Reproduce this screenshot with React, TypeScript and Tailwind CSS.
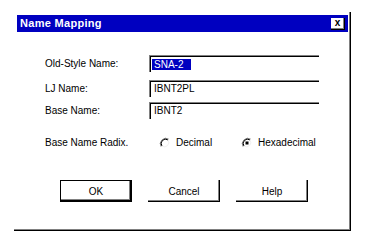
import React from "react";

function Radio({ checked }: { checked?: boolean }) {
  return (
    <svg width="12" height="12" viewBox="0 0 12 12" className="shrink-0">
      <path d="M2.2 9.8 A5.5 5.5 0 0 1 9.8 2.2" fill="none" stroke="#808080" strokeWidth="1" />
      <path d="M3 9 A4.3 4.3 0 0 1 9 3" fill="none" stroke="#000" strokeWidth="1" />
      <path d="M9.8 2.2 A5.5 5.5 0 0 1 2.2 9.8" fill="none" stroke="#fff" strokeWidth="1" />
      <path d="M9 3 A4.3 4.3 0 0 1 3 9" fill="none" stroke="#f0f0f0" strokeWidth="1" />
      {checked && <rect x="4.5" y="4.5" width="3" height="3" fill="#000" />}
    </svg>
  );
}

function Field({ label, value, selected, className }: { label: string; value: string; selected?: boolean; className?: string }) {
  return (
    <div className={"flex items-center " + (className ?? "")}>
      <div className="w-[104px] text-[10px] leading-none text-black">{label}</div>
      <div className="w-[170px] h-[17px] border-t border-l border-t-[#808080] border-l-[#808080] shadow-[inset_1px_1px_0_#000] bg-white flex items-center pl-[2px]">
        {selected ? (
          <span className="bg-[#0000c0] text-white text-[10px] leading-[11px] h-[11px] pl-[2px] pr-[8px]">{value}</span>
        ) : (
          <span className="text-black text-[10px] leading-none pl-[2px]">{value}</span>
        )}
      </div>
    </div>
  );
}

function Btn({ children, isDefault }: { children: React.ReactNode; isDefault?: boolean }) {
  return (
    <div
      className={
        "w-[72px] h-[22px] flex items-center justify-center text-[10px] text-black bg-white " +
        (isDefault
          ? "border border-black shadow-[inset_-1px_-1px_0_#000,inset_-2px_-2px_0_#808080]"
          : "shadow-[inset_-1px_-1px_0_#000,inset_-2px_-2px_0_#808080]")
      }
    >
      {children}
    </div>
  );
}

export default function App() {
  return (
    <div
      className="w-[388px] h-[241px] bg-white overflow-hidden"
      style={{ fontFamily: '"Liberation Sans", Arial, sans-serif' }}
    >
      <div className="pl-[14px] pt-[12px]">
        <div className="w-[337px] h-[219px] border-r border-b border-black shadow-[inset_-1px_-1px_0_#808080] pt-[3px] pl-[3px] flex flex-col">
          <div className="w-[331px] h-[17px] bg-[#0000c0] flex items-center justify-between pl-[3px] pr-[3px]">
            <span className="text-white font-bold text-[11px] leading-none tracking-[0.3px]">Name Mapping</span>
            <div className="w-[14px] h-[12px] bg-white shadow-[inset_-1px_-1px_0_#000,inset_-2px_-2px_0_#808080] flex items-center justify-center pb-[1px] pr-[1px]">
              <span className="text-black font-bold text-[10px] leading-none">x</span>
            </div>
          </div>
          <div className="pl-[28px] flex flex-col">
            <Field className="mt-[23px]" label="Old-Style Name:" value="SNA-2" selected />
            <Field className="mt-[8px]" label="LJ Name:" value="IBNT2PL" />
            <Field className="mt-[5px]" label="Base Name:" value="IBNT2" />
            <div className="flex items-center mt-[17px] h-[14px]">
              <div className="w-[114px] text-[10px] leading-none text-black">Base Name Radix.</div>
              <div className="flex items-center gap-[5px] w-[82px]">
                <Radio />
                <span className="text-[10px] leading-none text-black">Decimal</span>
              </div>
              <div className="flex items-center gap-[5px]">
                <Radio checked />
                <span className="text-[10px] leading-none text-black">Hexadecimal</span>
              </div>
            </div>
            <div className="flex mt-[30px] ml-[15px] gap-[16px]">
              <Btn isDefault>OK</Btn>
              <Btn>Cancel</Btn>
              <Btn>Help</Btn>
            </div>
          </div>
        </div>
      </div>
    </div>
  );
}
